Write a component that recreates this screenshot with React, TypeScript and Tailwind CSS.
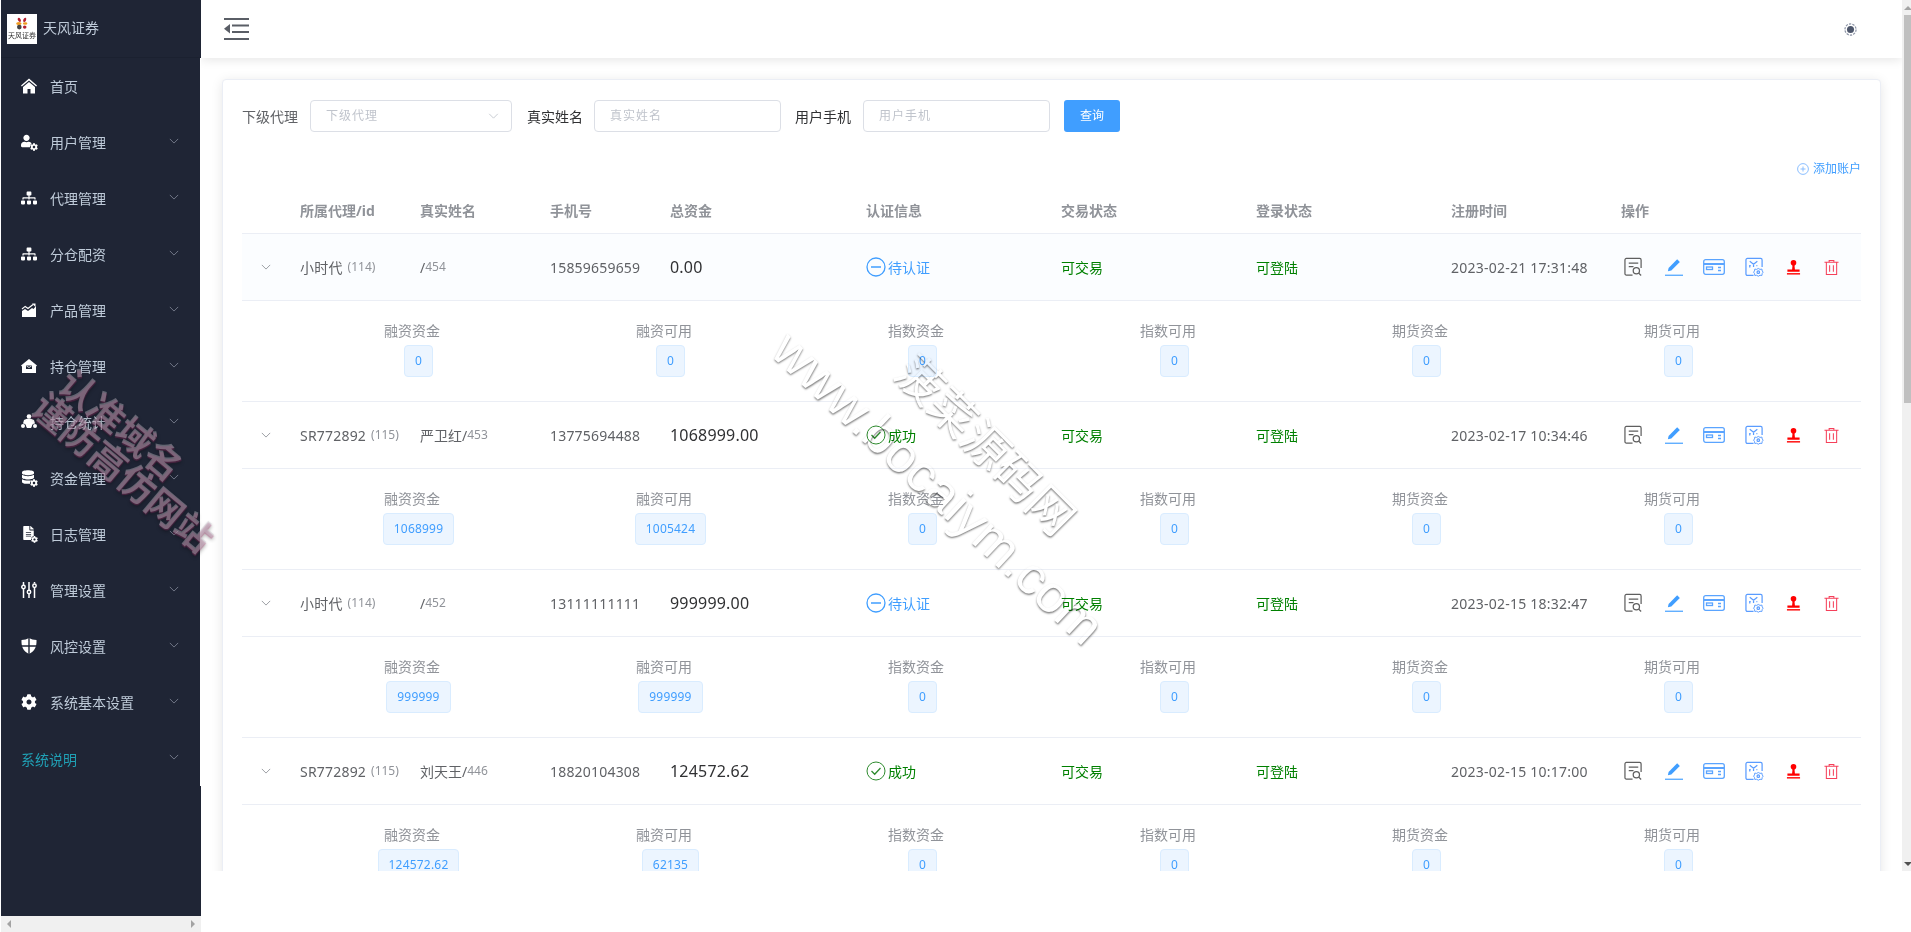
import { FaUser, FaSitemap, FaCog, FaDatabase, FaFileAlt } from "react-icons/fa";

const font = "font-['Noto_Sans','Noto_Sans_CJK_SC',sans-serif]";

function Chevron({ className }: { className?: string }) {
  return (
    <svg viewBox="0 0 12 7" className={className} fill="none" stroke="currentColor" strokeWidth="1">
      <path d="M1 1l5 5 5-5" />
    </svg>
  );
}

function Badge({ children }: { children: React.ReactNode }) {
  return <span className="absolute -right-[1px] -bottom-[1px] text-white bg-[#1f2535] rounded-full text-[8px]">{children}</span>;
}

function HomeIcon() {
  return (
    <svg viewBox="0 0 16 16" className="w-[16px] h-[16px]" fill="#fff">
      <path d="M8 .5L0 7.500l.8 1L8 2.500l7.200 6 .8-1z" />
      <path d="M8 4L2 9v6.500h4.500V11h3v4.500H14V9z" />
    </svg>
  );
}

function TrendIcon() {
  return (
    <svg viewBox="0 0 16 16" className="w-[16px] h-[16px]" fill="#fff">
      <path d="M1 14V9l3-2 3 2 4-3 1.500 1L15 4v10z" />
      <path d="M1 7l3.200-2.600 2.800 2L12 2.500" stroke="#fff" strokeWidth="1.200" fill="none" />
      <path d="M11 1.500h3.500V5z" />
      <path d="M1 14.500h14" stroke="#fff" />
    </svg>
  );
}

function WarehouseIcon() {
  return (
    <svg viewBox="0 0 16 16" className="w-[16px] h-[16px]" fill="#fff">
      <path d="M8 1L0 7.500l1 1V15h14V8.500l1-1z" />
      <path d="M5 7.500h6v3.500H5z" fill="#1f2535" />
      <path d="M5.500 8l2.500 1.500L10.500 8" stroke="#fff" strokeWidth=".8" fill="none" />
    </svg>
  );
}

function GroupIcon() {
  return (
    <svg viewBox="0 0 16 16" className="w-[16px] h-[16px]" fill="#fff">
      <circle cx="8" cy="2.500" r="2.300" />
      <circle cx="2" cy="12" r="2" />
      <circle cx="14" cy="12" r="2" />
      <path d="M3 6c1.500-1 3-1.300 5-1.300S11.500 5 13 6l1 3.500c-2 0-3 1-3.200 3l-.8 1.500H6l-.8-1.500C5 10.500 4 9.500 2 9.500z" />
    </svg>
  );
}

function SlidersIcon() {
  return (
    <svg viewBox="0 0 16 16" className="w-[16px] h-[16px]" fill="none" stroke="#fff" strokeWidth="1.500">
      <path d="M2.500 0v3M2.500 7v9M8 0v8M8 12v4M13.500 0v1.500M13.500 6v10" />
      <circle cx="2.500" cy="5" r="1.700" />
      <circle cx="8" cy="10" r="1.700" />
      <circle cx="13.500" cy="3.800" r="1.700" />
    </svg>
  );
}

function ShieldIcon() {
  return (
    <svg viewBox="0 0 16 16" className="w-[16px] h-[16px]" fill="#fff">
      <path d="M8 0c2 1.300 4.500 2 7.500 2 .3 6.500-1.500 11-7.500 14C2 13 .2 8.500.500 2 3.500 2 6 1.300 8 0z" />
      <path d="M7.300 0h1.400v16H7.300zM0 7.300h16v1.400H0z" fill="#1f2535" />
    </svg>
  );
}

const menu = [
  { label: "首页", icon: <HomeIcon /> },
  {
    label: "用户管理",
    arrow: true,
    icon: (
      <span className="relative block w-[16px] h-[16px]">
        <FaUser className="w-[11px] h-[14px] text-white" />
        <Badge>
          <FaCog className="w-[8px] h-[8px]" />
        </Badge>
      </span>
    ),
  },
  { label: "代理管理", arrow: true, icon: <FaSitemap className="w-[16px] h-[16px] text-white" /> },
  { label: "分仓配资", arrow: true, icon: <FaSitemap className="w-[16px] h-[16px] text-white" /> },
  { label: "产品管理", arrow: true, icon: <TrendIcon /> },
  { label: "持仓管理", arrow: true, icon: <WarehouseIcon /> },
  { label: "持仓统计", arrow: true, icon: <GroupIcon /> },
  {
    label: "资金管理",
    arrow: true,
    icon: (
      <span className="relative block w-[16px] h-[16px]">
        <FaDatabase className="w-[12px] h-[14px] ml-[1px] text-white" />
        <Badge>
          <FaCog className="w-[8px] h-[8px]" />
        </Badge>
      </span>
    ),
  },
  {
    label: "日志管理",
    arrow: true,
    icon: (
      <span className="relative block w-[16px] h-[16px]">
        <FaFileAlt className="w-[11px] h-[14px] ml-[2px] text-white" />
        <Badge>
          <FaCog className="w-[7px] h-[7px]" />
        </Badge>
      </span>
    ),
  },
  { label: "管理设置", arrow: true, icon: <SlidersIcon /> },
  { label: "风控设置", arrow: true, icon: <ShieldIcon /> },
  { label: "系统基本设置", arrow: true, icon: <FaCog className="w-[16px] h-[16px] text-white" /> },
];

function Sidebar() {
  return (
    <aside className="w-[201px] shrink-0 h-[932px] pl-px flex flex-col bg-white">
      <div className="h-[58px] shrink-0 bg-[#1f2535] border-b border-[#1b2130] flex items-center pl-[6px] gap-[6px]">
        <div className="w-[30px] h-[30px] bg-white flex flex-col items-center pt-[1px]">
          <svg viewBox="0 0 20 14" className="w-[18px] h-[17px]">
            <ellipse cx="7" cy="3" rx="1.500" ry="2.500" fill="#b3202f" transform="rotate(-30 7 3)" />
            <ellipse cx="13" cy="3" rx="1.500" ry="2.500" fill="#b3202f" transform="rotate(25 13 3)" />
            <ellipse cx="6.500" cy="7" rx="3" ry="1.800" fill="#ef9a1f" />
            <ellipse cx="13.500" cy="7" rx="2.500" ry="1.500" fill="#ef9a1f" />
            <circle cx="7" cy="11" r="2.600" fill="#444" />
            <ellipse cx="13" cy="11" rx="2" ry="1.800" fill="#b3202f" />
          </svg>
          <span className="text-[7px] leading-[8px] text-[#333] whitespace-nowrap">天风证券</span>
        </div>
        <span className="text-[14px] text-[#bfcbd9] -mt-[2px]">天风证券</span>
      </div>
      <nav className="h-[728px] bg-[#1f2535] border-r border-white shrink-0">
        {menu.map((m) => (
          <div key={m.label} className="h-[56px] flex items-center pl-[20px] pr-[21px] relative">
            <span className="w-[16px] h-[16px] flex items-center justify-center shrink-0">{m.icon}</span>
            <span className="ml-[13px] text-[14px] text-[#bfcbd9]">{m.label}</span>
            {m.arrow && <Chevron className="absolute left-[168px] top-[24px] w-[10px] h-[6px] text-[#7f8796]" />}
          </div>
        ))}
        <div className="h-[56px] flex items-center pl-[20px] pt-[3px] relative">
          <span className="text-[14px] text-[#20a0b5]">系统说明</span>
          <Chevron className="absolute left-[168px] top-[24px] w-[10px] h-[6px] text-[#7f8796]" />
        </div>
      </nav>
      <div className="flex-1 bg-[#1f2535]" />
      <div className="h-[16px] shrink-0 bg-[#f0f0f0] flex items-center justify-between px-[6px]">
        <span className="w-0 h-0 border-y-[4px] border-y-transparent border-r-[4px] border-r-[#a3a3a3]" />
        <span className="w-0 h-0 border-y-[4px] border-y-transparent border-l-[4px] border-l-[#a3a3a3]" />
      </div>
    </aside>
  );
}

function Scrollbar() {
  return (
    <div className="w-[9px] shrink-0 h-[871px] bg-[#f0f0f0] flex flex-col pl-[2px]">
      <div className="h-[15px] shrink-0 flex items-center justify-center">
        <span className="w-0 h-0 border-x-[4px] border-x-transparent border-b-[4px] border-b-[#a3a3a3]" />
      </div>
      <div className="h-[388px] bg-[#c0c0c0] shrink-0" />
      <div className="flex-1" />
      <div className="h-[15px] shrink-0 flex items-center justify-center">
        <span className="w-0 h-0 border-x-[4px] border-x-transparent border-t-[4px] border-t-[#505050]" />
      </div>
    </div>
  );
}

function Field({ label, placeholder, width, gap, arrow, dark }: { label: string; placeholder: string; width: string; gap: string; arrow?: boolean; dark?: boolean }) {
  return (
    <div className="flex items-center">
      <span className={`${gap} text-[14px] ${dark ? "text-[#303133]" : "text-[#606266]"}`}>{label}</span>
      <div className={`${width} h-[32px] border border-[#dcdfe6] rounded-[4px] flex items-center justify-between pl-[15px] pr-[12px]`}>
        <span className="text-[12px] tracking-[1px] text-[#c0c4cc]">{placeholder}</span>
        {arrow && <Chevron className="w-[11px] h-[6px] text-[#c0c4cc]" />}
      </div>
    </div>
  );
}

function PendingIcon() {
  return (
    <svg viewBox="0 0 20 20" className="w-[20px] h-[20px] shrink-0" fill="none" stroke="#409eff" strokeWidth="1.300">
      <circle cx="10" cy="10" r="9" />
      <path d="M5 10h10" strokeWidth="1.500" />
    </svg>
  );
}

function OkIcon() {
  return (
    <svg viewBox="0 0 20 20" className="w-[20px] h-[20px] shrink-0" fill="none" stroke="#2e8b2e" strokeWidth="1">
      <circle cx="10" cy="10" r="9" />
      <path d="M5.500 10l3.200 3.200L14.500 7" strokeWidth="1.300" />
    </svg>
  );
}

function Actions() {
  return (
    <div className="flex items-center h-full pl-[13px]">
      <svg viewBox="0 0 20 20" className="w-[19px] h-[20px] text-[#5f5f5f]" fill="none" stroke="currentColor" strokeWidth="1.300">
        <path d="M9 18.500H2.500a1.500 1.500 0 01-1.500-1.500V2.500A1.500 1.500 0 012.500 1h14A1.500 1.500 0 0118 2.500V11" />
        <path d="M5 6h10M5 9.500h5" />
        <circle cx="13" cy="14" r="3.300" />
        <path d="M15.500 16.500l2.500 2.500" />
      </svg>
      <svg viewBox="0 0 20 20" className="w-[20px] h-[18px] ml-[21px] text-[#409eff]" fill="currentColor">
        <path d="M13.500 1.500l3 3L7 14l-3.800.8.800-3.800z" />
        <path d="M0 18.500h20v1.300H0z" />
      </svg>
      <svg viewBox="0 0 22 16" className="w-[22px] h-[16px] ml-[19px] text-[#5aa4ff]" fill="none" stroke="currentColor" strokeWidth="1.300">
        <rect x=".700" y=".700" width="20.600" height="14.600" rx="2" />
        <path d="M1 5h20" strokeWidth="2" />
        <rect x="3.500" y="8" width="6" height="2.500" />
        <path d="M15 8.500h3M15 11.500h3" />
      </svg>
      <svg viewBox="0 0 20 20" className="w-[19px] h-[20px] ml-[20px] text-[#5a9cff]" fill="none" stroke="currentColor" strokeWidth="1.300">
        <path d="M9 18.800H2.500a1.500 1.500 0 01-1.500-1.500V2.500A1.500 1.500 0 012.500 1h14A1.500 1.500 0 0118 2.500V10" />
        <path d="M5 4l4 3 4-3M9 7v3M6 8.500H5v2M12 8.500h1" />
        <path d="M14 11.500l1.800 1 2-.3.300 2 1 1.200-1 1.500-.300 2-2-.2-1.800 1-1.700-1-2 .2-.300-2-1-1.500 1-1.200.300-2 2 .3z" strokeWidth="1" />
        <circle cx="14" cy="15.500" r="1.300" />
      </svg>
      <svg viewBox="0 0 16 16" className="w-[15px] h-[15px] ml-[22px] text-[#ff0000]" fill="currentColor">
        <circle cx="8" cy="3" r="3" />
        <path d="M7 5h2l.5 5H14.500v2.500h-13V10H6.500z" />
        <path d="M1 14h14v1.500H1z" />
      </svg>
      <svg viewBox="0 0 16 17" className="w-[15px] h-[17px] ml-[23px] text-[#f5405a]" fill="none" stroke="currentColor" strokeWidth="1.100">
        <path d="M.500 3h15M5.500 3V1h5v2M2.500 3v13h11V3M6 6v7M10 6v7" />
      </svg>
    </div>
  );
}

const rows = [
  { agent: "小时代", id: "(114)", name: "", uid: "454", phone: "15859659659", money: "0.00", ok: false, date: "2023-02-21 17:31:48", a: "0", b: "0" },
  { agent: "SR772892", id: "(115)", name: "严卫红", uid: "453", phone: "13775694488", money: "1068999.00", ok: true, date: "2023-02-17 10:34:46", a: "1068999", b: "1005424" },
  { agent: "小时代", id: "(114)", name: "", uid: "452", phone: "13111111111", money: "999999.00", ok: false, date: "2023-02-15 18:32:47", a: "999999", b: "999999" },
  { agent: "SR772892", id: "(115)", name: "刘天王", uid: "446", phone: "18820104308", money: "124572.62", ok: true, date: "2023-02-15 10:17:00", a: "124572.62", b: "62135" },
];

const cols = "grid grid-cols-[48px_120px_130px_120px_196px_195px_195px_195px_170px_250px]";
const headers = ["", "所属代理/id", "真实姓名", "手机号", "总资金", "认证信息", "交易状态", "登录状态", "注册时间", "操作"];

function Amount({ label, value }: { label: string; value: string }) {
  return (
    <div className="flex flex-col items-center">
      <span className="h-[20px] leading-[20px] text-[14px] text-[#909399]">{label}</span>
      <span className="mt-[4px] ml-[13px] h-[32px] min-w-[29px] px-[10px] flex items-center justify-center text-[12px] tracking-[0.2px] text-[#409eff] bg-[#ecf5ff] border border-[#d9ecff] rounded-[4px]">
        {value}
      </span>
    </div>
  );
}

function Row({ r, index }: { r: (typeof rows)[number]; index: number }) {
  const cell = "flex items-center pl-[10px]";
  return (
    <div>
      <div className={`${cols} h-[67px] border-b border-[#ebeef5] ${index === 0 ? "bg-[#fbfdff]" : ""}`}>
        <div className="flex items-center justify-center">
          <Chevron className="w-[10px] h-[6px] text-[#8a8d94]" />
        </div>
        <div className={cell}>
          <span className="text-[14px] tracking-[0.2px] text-[#606266] whitespace-nowrap">{r.agent}</span>
          <span className="text-[12px] text-[#909399] ml-[5px]">{r.id}</span>
        </div>
        <div className={cell}>
          <span className="text-[14px] text-[#606266]">{r.name}/</span>
          <span className="text-[12px] text-[#909399]">{r.uid}</span>
        </div>
        <div className={`${cell} text-[14px] tracking-[0.2px] text-[#606266]`}>{r.phone}</div>
        <div className={`${cell} text-[16px] tracking-[0.2px] text-[#303133]`}>{r.money}</div>
        <div className={`${cell} text-[14px] ${r.ok ? "text-[#008000]" : "text-[#409eff]"}`}>
          {r.ok ? <OkIcon /> : <PendingIcon />}
          <span className="ml-[2px]">{r.ok ? "成功" : "待认证"}</span>
        </div>
        <div className={`${cell} text-[14px] text-[#008000]`}>可交易</div>
        <div className={`${cell} text-[14px] text-[#008000]`}>可登陆</div>
        <div className={`${cell} text-[14px] tracking-[0.24px] text-[#606266]`}>{r.date}</div>
        <div>
          <Actions />
        </div>
      </div>
      <div className="h-[101px] border-b border-[#ebeef5] pt-[20px] pl-[44px] pr-[63px] grid grid-cols-6">
        <Amount label="融资资金" value={r.a} />
        <Amount label="融资可用" value={r.b} />
        <Amount label="指数资金" value="0" />
        <Amount label="指数可用" value="0" />
        <Amount label="期货资金" value="0" />
        <Amount label="期货可用" value="0" />
      </div>
    </div>
  );
}

export default function App() {
  return (
    <div className={`${font} relative w-[1911px] h-[932px] overflow-hidden bg-white flex`}>
      <Sidebar />
      <div className="flex-1 h-[871px] flex min-w-0">
        <div className="flex-1 min-w-0 flex flex-col overflow-hidden">
          <header className="relative z-10 h-[58px] shrink-0 bg-white shadow-[0_2px_10px_rgba(0,0,0,0.1)] flex items-center justify-between pl-[23px] pr-[45px]">
            <svg viewBox="0 0 25 22" className="w-[25px] h-[22px]" fill="#5a5e66">
              <path d="M0 0h25v2H0zM8 6.500h17v2H8zM8 13h17v2H8zM0 20h25v2H0z" />
              <path d="M6 6v9.500L0 10.800z" />
            </svg>
            <svg viewBox="0 0 14 14" className="w-[13px] h-[13px]">
              <circle cx="7" cy="7" r="6" fill="none" stroke="#8b93a5" strokeWidth="1.300" strokeDasharray="2.500 1.200" />
              <circle cx="7" cy="7" r="3.800" fill="#4d566b" />
            </svg>
          </header>
          <div className="flex-1 pt-[21px] px-[21px] overflow-hidden">
            <section className="bg-white border border-[#ebeef5] rounded-[4px] shadow-[0_2px_12px_rgba(0,0,0,0.1)] px-[19px] pt-[20px] pb-[40px]">
              <div className="flex items-center h-[32px]">
                <Field label="下级代理" placeholder="下级代理" gap="mr-[12px]" width="w-[202px]" arrow />
                <div className="ml-[15px]">
                  <Field label="真实姓名" placeholder="真实姓名" gap="mr-[11px]" width="w-[187px]" dark />
                </div>
                <div className="ml-[14px]">
                  <Field label="用户手机" placeholder="用户手机" gap="mr-[12px]" width="w-[187px]" dark />
                </div>
                <button className="ml-[14px] w-[56px] h-[32px] bg-[#409eff] text-white text-[12px] rounded-[3px]">查询</button>
              </div>
              <div className="mt-[29px] h-[16px] flex items-center justify-end text-[12px] text-[#409eff]">
                <svg viewBox="0 0 12 12" className="w-[12px] h-[12px] mr-[4px]" fill="none" stroke="#7fb8ff" strokeWidth=".9">
                  <circle cx="6" cy="6" r="5.400" />
                  <path d="M3.500 6h5M6 3.500v5" />
                </svg>
                添加账户
              </div>
              <div className={`${cols} h-[47px] border-b border-[#ebeef5] mt-[10px]`}>
                {headers.map((h, i) => (
                  <div key={i} className="flex items-center pl-[10px] text-[14px] font-bold text-[#909399] whitespace-nowrap">
                    {h}
                  </div>
                ))}
              </div>
              {rows.map((r, i) => (
                <Row key={i} r={r} index={i} />
              ))}
            </section>
          </div>
        </div>
        <Scrollbar />
      </div>

      {/* overlay watermarks */}
      <div className="absolute left-[72px] top-[360px] pointer-events-none rotate-[40deg] origin-top-left text-[37px] leading-[35px] font-bold text-[#c8c8d0]/40 whitespace-nowrap [text-shadow:1px_1px_1px_rgba(170,50,110,0.35),2px_2px_4px_rgba(0,0,0,0.3)]">
        <div className="pl-[5px]">认准域名</div>
        <div>谨防高仿网站</div>
      </div>
      <div className="absolute left-[800px] top-[320px] pointer-events-none mix-blend-multiply rotate-[43deg] origin-top-left text-[52px] leading-[56px] font-['Liberation_Sans',sans-serif] text-white whitespace-nowrap [text-shadow:1px_1px_2px_rgba(0,0,0,0.5)]">
        www.bocaiym.com
      </div>
      <div className="absolute left-[923px] top-[345px] pointer-events-none mix-blend-multiply rotate-[45deg] origin-top-left text-[46px] leading-[50px] text-white whitespace-nowrap [text-shadow:1px_1px_2px_rgba(0,0,0,0.5)]">
        菠菜源码网
      </div>
    </div>
  );
}
